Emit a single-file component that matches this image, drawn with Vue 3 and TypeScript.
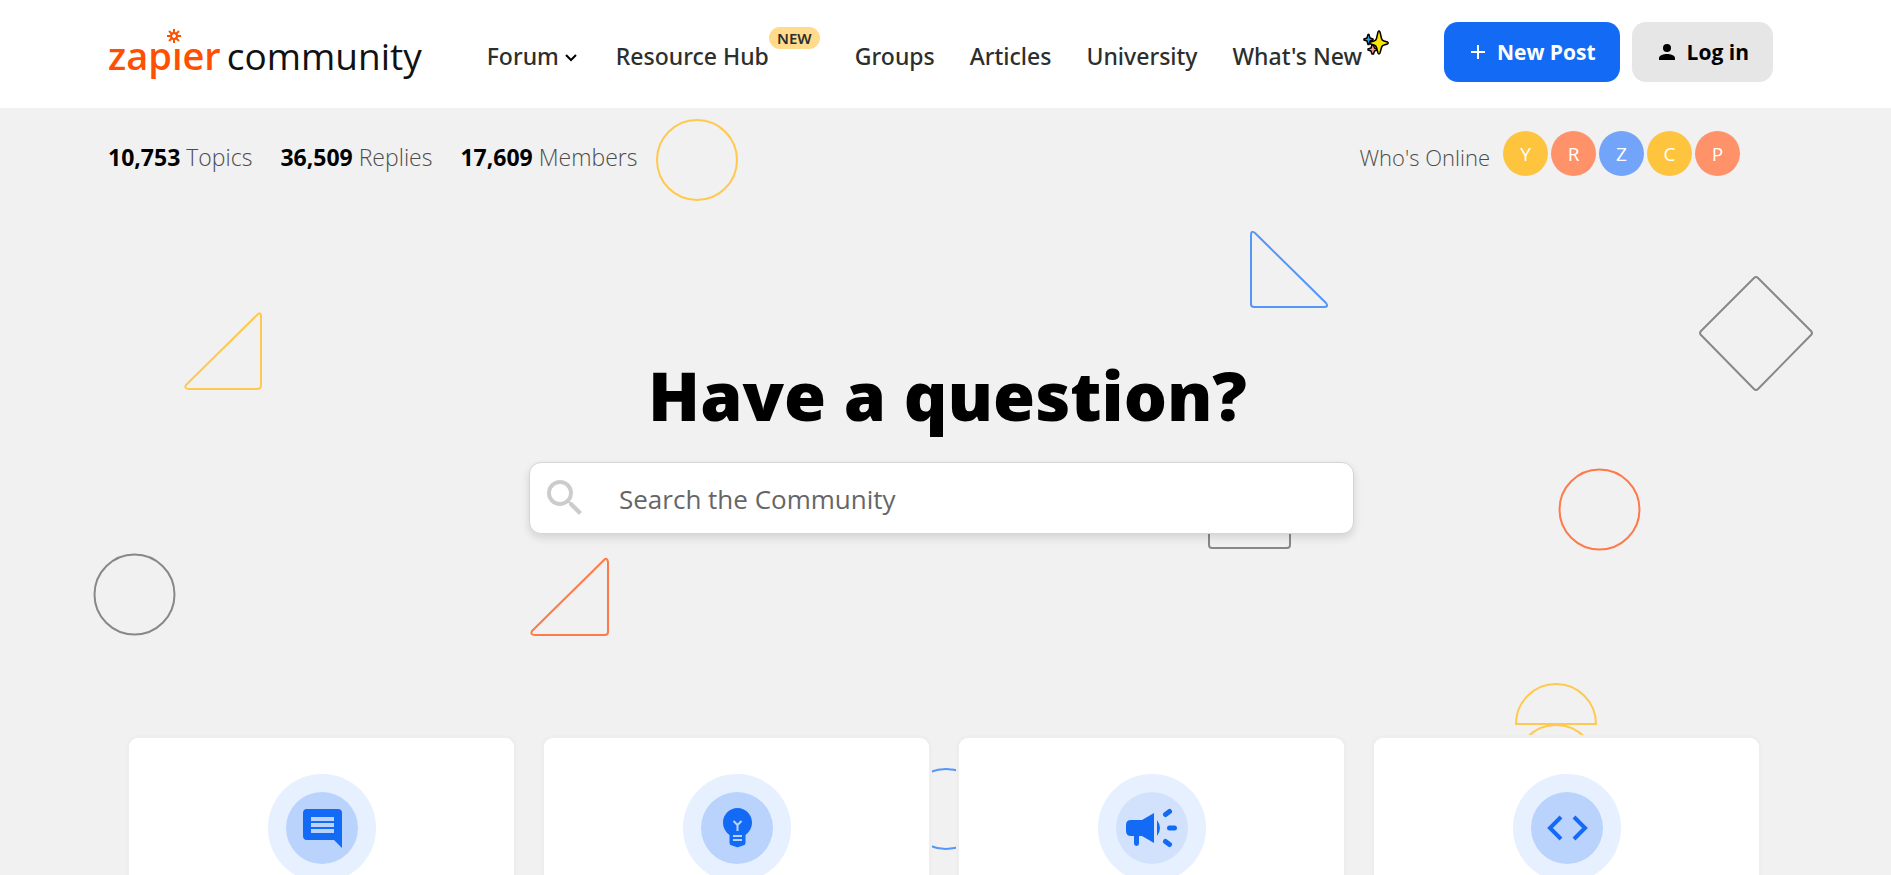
<script setup lang="ts">
import { ref } from 'vue'

interface Stat { value: string; label: string }
interface Member { initial: string; tone: string }
interface Topic { id: string; label: string }

const stats: Stat[] = [
  { value: '10,753', label: 'Topics' },
  { value: '36,509', label: 'Replies' },
  { value: '17,609', label: 'Members' },
]

const online: Member[] = [
  { initial: 'Y', tone: 'yellow' },
  { initial: 'R', tone: 'coral' },
  { initial: 'Z', tone: 'blue' },
  { initial: 'C', tone: 'yellow' },
  { initial: 'P', tone: 'coral' },
]

const topics: Topic[] = [
  { id: 'forum', label: 'Forum' },
  { id: 'ideas', label: 'Ideas' },
  { id: 'news', label: 'Announcements' },
  { id: 'code', label: 'Developers' },
]

const spokes = [0, 45, 90, 135, 180, 225, 270, 315]
const query = ref('')
</script>

<template>
  <div class="page">
    <header class="header">
      <a class="logo" href="#" aria-label="Zapier community">
        <span class="brand">zapıer
          <svg class="spark" viewBox="0 0 14 14" aria-hidden="true">
            <line v-for="a in spokes" :key="a" x1="7" y1="0" x2="7" y2="5" :transform="`rotate(${a} 7 7)`" />
            <circle cx="7" cy="7" r="3" />
          </svg>
        </span>
        <span class="suffix">community</span>
      </a>
      <nav class="nav">
        <a class="forum" href="#">Forum
          <svg class="chevron" viewBox="0 0 12 8" aria-hidden="true"><path d="M1 1l5 5 5-5" /></svg>
        </a>
        <a class="resources" href="#">Resource Hub<span class="badge">NEW</span></a>
        <a href="#">Groups</a>
        <a href="#">Articles</a>
        <a href="#">University</a>
        <a class="whats-new" href="#">What's New
          <svg class="sparkles" viewBox="0 0 26 26" aria-hidden="true">
            <path fill="#2fa4e7" d="M5 4.500Q5.500 4 6 4.500L7 8L10 9V10L7 11L6 14.500H5L4 11L1 10V9L4 8Z" />
            <path fill="#ff9b85" d="M9 15H10.500L11.500 18L14 19V20L11.500 21L10.500 24H9L8 21L5 20V19L8 18Z" />
            <path fill="#ffe600" d="M15 2Q16 0 17 2L18.500 8.500Q19 10.500 21 11L24.500 12Q26 13 24.500 14L21 15Q19 15.500 18.500 17.500L17 23Q16 25 15 23L13.500 17.500Q13 15.500 11 15L7.500 14Q6 13 7.500 12L11 11Q13 10.500 13.500 8.500Z" />
          </svg>
        </a>
      </nav>
      <div class="actions">
        <button class="button primary" type="button">
          <svg class="plus" viewBox="0 0 14 14" aria-hidden="true"><path d="M7 0v14M0 7h14" /></svg>
          New Post
        </button>
        <button class="button" type="button">
          <svg class="person" viewBox="0 0 16 16" aria-hidden="true">
            <circle cx="8" cy="4" r="4" /><path d="M0 16v-2C0 11.300 5 10 8 10s8 1.300 8 4v2z" />
          </svg>
          Log in
        </button>
      </div>
    </header>

    <main class="hero">
      <svg class="shapes" viewBox="0 0 1891 767" preserveAspectRatio="xMidYMin slice" aria-hidden="true">
        <g class="gold">
          <circle cx="697" cy="52" r="40" />
          <path d="M186 277L258 206Q261 204 261 208V277Q261 281 257 281H189Q184 281 186 277Z" />
          <path d="M1516 616A40 40 0 0 1 1596 616Z" />
          <path d="M1516 657A40 40 0 0 1 1596 657Z" />
        </g>
        <g class="azure">
          <path d="M1251 127Q1251 122 1255 125L1326 195Q1329 199 1324 199H1254Q1251 199 1251 196Z" />
          <circle cx="946" cy="701" r="40" />
        </g>
        <g class="grey">
          <path d="M1754 170Q1756 168 1758 170L1811 223Q1813 225 1811 227L1758 281Q1756 283 1754 281L1701 227Q1699 225 1701 223Z" />
          <circle cx="134.500" cy="486.500" r="40" />
          <rect x="1209" y="360" width="81" height="80" rx="3" />
        </g>
        <g class="orange">
          <circle cx="1599.500" cy="401.500" r="40" />
          <path d="M532 523L604 452Q607 449 608 454V524Q608 527 605 527H535Q530 527 532 523Z" />
        </g>
      </svg>

      <div class="summary">
        <ul class="stats">
          <li v-for="s in stats" :key="s.label"><strong>{{ s.value }}</strong> {{ s.label }}</li>
        </ul>
        <div class="online">
          <span class="caption">Who's Online</span>
          <ul class="members">
            <li v-for="m in online" :key="m.initial"><a class="avatar" :class="m.tone" href="#">{{ m.initial }}</a></li>
          </ul>
        </div>
      </div>

      <section class="ask">
        <h1>Have a question?</h1>
        <form class="search" role="search" @submit.prevent>
          <svg class="lens" viewBox="3 3 18 18" aria-hidden="true">
            <path d="M15.500 14h-.79l-.28-.27A6.471 6.471 0 0 0 16 9.500 6.500 6.500 0 1 0 9.500 16c1.610 0 3.090-.59 4.230-1.570l.27.28v.79l5 4.990L20.490 19l-4.990-5zm-6 0C7.010 14 5 11.990 5 9.500S7.010 5 9.500 5 14 7.010 14 9.500 11.990 14 9.500 14z" />
          </svg>
          <input v-model="query" type="search" placeholder="Search the Community" aria-label="Search the Community" />
        </form>
      </section>

      <section class="cards">
        <a v-for="t in topics" :key="t.id" class="card" href="#" :aria-label="t.label">
          <svg class="emblem" viewBox="0 0 108 108" aria-hidden="true">
            <circle class="halo" cx="54" cy="54" r="54" />
            <circle class="disc" :class="{ pale: t.id === 'news' }" cx="54" cy="54" r="36" />
            <template v-if="t.id === 'forum'">
              <path class="ink" d="M39 35H70Q74 35 74 39V74L66 66H39Q35 66 35 62V39Q35 35 39 35Z" />
              <path class="cut" d="M43 43h23v4H43zM43 49h23v4H43zM43 55h23v4H43z" />
            </template>
            <template v-else-if="t.id === 'ideas'">
              <path class="ink" d="M54.500 34C46.500 34 40 40.500 40 48.500C40 53.500 42.500 58 46.500 61V69Q46.500 71 49 71.500L52 72.500Q54.500 74 57 72.500L60 71.500Q62.500 71 62.500 69V61C66.500 58 69 53.500 69 48.500C69 40.500 62.500 34 54.500 34Z" />
              <path class="cut" d="M50 61h9v2h-9zM50 65h9v2h-9z" />
              <path class="filament" d="M50.500 47l4 4 4-4M54.500 51v6" />
            </template>
            <template v-else-if="t.id === 'news'">
              <path class="ink" d="M33 46H44L56 39V69L44 62H41V69.500A2.500 2.500 0 0 1 36 69.500V62H33Q28 62 28 57V51Q28 46 33 46ZM59 46Q65 54 59 62Z" />
              <path class="rays" d="M67.500 40.500l4-3M71.500 54h5M67.500 67.500l4 3" />
            </template>
            <path v-else class="angles" d="M48 43L37 54l11 11M61 43l11 11-11 11" />
          </svg>
        </a>
      </section>
    </main>
  </div>
</template>

<style>
body { margin: 0; background: #f1f1f1; }
html { overflow: hidden; }
</style>

<style scoped>
.page { font-family: "Open Sans", "Noto Sans", sans-serif; color: #000; }
a { color: inherit; text-decoration: none; }
ul { display: flex; margin: 0; padding: 0; list-style: none; }
button, input { font: inherit; }

.header {
  display: flex;
  align-items: center;
  box-sizing: border-box;
  height: 108px;
  padding: 0 118px 4px 108px;
  background: #fff;
}
.logo { display: flex; align-items: baseline; gap: 6px; padding-top: 6px; line-height: 56px; }
.brand { position: relative; color: #ff4f00; font-size: 38px; font-weight: 600; }
.suffix { color: #111; font-size: 37px; }
.spark { position: absolute; left: 59px; top: 2px; width: 14px; height: 14px; fill: none; stroke: #ff4f00; stroke-width: 2; }

.nav { display: flex; align-items: baseline; gap: 35px; margin-left: 65px; padding-top: 8px; color: #2d2e2e; font-family: "Noto Sans", sans-serif; font-size: 23px; font-weight: 500; line-height: 36px; white-space: nowrap; }
.nav a { position: relative; }
.forum { margin-right: 4px; }
.chevron { width: 12px; height: 8px; margin-bottom: 3px; fill: none; stroke: #000; stroke-width: 2; }
.resources { padding-right: 51px; }
.badge { position: absolute; right: 0; top: -11px; box-sizing: border-box; width: 51px; height: 22px; border-radius: 11px; background: #ffdb8b; font-size: 15px; font-weight: 600; line-height: 22px; text-align: center; }
.whats-new { padding-right: 27px; }
.sparkles { position: absolute; right: 0; top: -8px; width: 26px; height: 26px; stroke: #000; stroke-width: 1.5; stroke-linejoin: round; }

.actions { display: flex; gap: 12px; margin-left: auto; }
.button {
  display: flex;
  align-items: center;
  justify-content: center;
  gap: 12px;
  height: 60px;
  padding: 0 24px 0 27px;
  border: 0;
  border-radius: 14px;
  background: #e6e6e6;
  color: #000;
  font-size: 21px;
  font-weight: 700;
  white-space: nowrap;
}
.primary { background: #136bf5; color: #fff; }
.plus { width: 14px; height: 14px; stroke: #fff; stroke-width: 2; }
.person { width: 16px; height: 16px; }

.hero { position: relative; }
.shapes { position: absolute; left: 0; top: 0; width: 100%; height: 767px; fill: none; stroke-width: 2; pointer-events: none; }
.gold { stroke: #ffc94f; }
.azure { stroke: #5596f8; }
.grey { stroke: #888; }
.orange { stroke: #ff7a48; }

.summary { position: relative; display: flex; justify-content: space-between; padding: 23px 151px 0 108px; color: #4c4c4c; line-height: 52px; }
.stats { gap: 28px; font-size: 23px; font-weight: 300; }
.stats strong { color: #000; font-weight: 700; }
.online { display: flex; gap: 13px; }
.caption { font-size: 22px; font-weight: 300; }
.members { gap: 3px; }
.avatar { display: block; width: 45px; height: 45px; border-radius: 50%; color: #fff; font-size: 19px; line-height: 46px; text-align: center; }
.yellow { background: #ffc43e; }
.coral { background: #ff9269; }
.blue { background: #72a5f9; }

.ask { position: relative; display: flex; flex-direction: column; align-items: center; padding: 164px 8px 0 0; }
h1 { margin: 0; padding-left: 12px; font-size: 68px; font-weight: 800; line-height: 96px; }
.search {
  display: flex;
  align-items: center;
  box-sizing: border-box;
  width: 825px;
  max-width: 90%;
  height: 72px;
  margin-top: 19px;
  padding: 0 17px;
  border: 1px solid #d5d5d9;
  border-radius: 12px;
  background: #fff;
  box-shadow: 0 4px 8px rgba(0, 0, 0, .12);
}
.lens { width: 36px; height: 36px; fill: #ccc; }
.search input { flex: 1; min-width: 0; height: 68px; margin-left: 36px; padding: 2px 0 0; border: 0; outline: 0; background: transparent; font-size: 26px; appearance: none; }
.search input::placeholder { color: #666; opacity: 1; }

.cards { position: relative; display: grid; grid-template-columns: repeat(4, 1fr); gap: 24px; padding: 201px 129px 0 126px; }
.card { display: flex; justify-content: center; height: 270px; padding-top: 36px; border: 3px solid #eee; border-radius: 12px; background: #fff; }
.emblem { width: 108px; height: 108px; }
.halo { fill: #e6f0ff; }
.disc { fill: #b9d3fc; }
.disc.pale { fill: #d2e2fd; }
.ink { fill: #136bf5; }
.cut { fill: #b9d3fc; }
.filament { fill: none; stroke: #b9d3fc; stroke-width: 2; }
.rays { fill: none; stroke: #136bf5; stroke-width: 5; stroke-linecap: round; }
.angles { fill: none; stroke: #136bf5; stroke-width: 4; }
</style>
